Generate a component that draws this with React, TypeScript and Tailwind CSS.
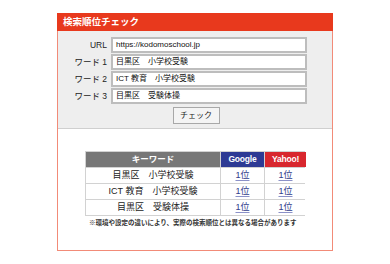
import React from 'react';

const fields = [
  { label: 'URL', value: 'https://kodomoschool.jp' },
  { label: 'ワード 1', value: '目黒区　小学校受験' },
  { label: 'ワード 2', value: 'ICT 教育　小学校受験' },
  { label: 'ワード 3', value: '目黒区　受験体操' },
];

const results = ['目黒区　小学校受験', 'ICT 教育　小学校受験', '目黒区　受験体操'];

const App: React.FC = () => {
  return (
    <div
      className="w-[390px] h-[264px] bg-white pt-[13px] pl-[57px]"
      style={{ fontFamily: '"Liberation Sans", "Noto Sans CJK JP", sans-serif' }}
    >
      <div className="w-[276px] h-[238px] flex flex-col">
        {/* Header */}
        <div className="h-[18px] bg-[#e8391d] flex items-center pl-[6px]">
          <span className="text-[9.5px] font-bold text-white leading-none">検索順位チェック</span>
        </div>

        <div className="flex-1 flex flex-col border-x-[1.5px] border-b-[1.5px] border-[#f28b78]">
          {/* Form */}
          <div className="bg-[#eeeeee] border-b border-[#cfcfcf] pt-[6px] pb-[4px] flex flex-col">
            <div className="flex flex-col gap-[1px]">
              {fields.map((f) => (
                <div key={f.label} className="flex items-center h-[16px]">
                  <div className="w-[49px] text-right text-[8.5px] text-[#222] leading-none">{f.label}</div>
                  <div className="ml-[4px] w-[196px] h-[16px] bg-white border-2 border-[#bdbdbd] flex items-center pl-[3px]">
                    <span className="text-[8px] text-[#111] leading-none whitespace-nowrap">{f.value}</span>
                  </div>
                </div>
              ))}
            </div>
            <div className="flex justify-center mt-[3px] pl-[2px]">
              <div className="w-[47px] h-[17px] bg-[#f4f4f4] border border-[#a8a8a8] flex items-center justify-center">
                <span className="text-[8px] text-[#222] leading-none">チェック</span>
              </div>
            </div>
          </div>

          {/* Result table */}
          <div className="pt-[22px] pl-[27px]">
            <div className="w-[220px] border border-[#d2d2d2] bg-[#d2d2d2] grid grid-cols-[134px_43px_41px] gap-[1px]">
              <div className="h-[15px] bg-[#777777] flex items-center justify-center">
                <span className="text-[8.5px] font-bold text-white leading-none">キーワード</span>
              </div>
              <div className="h-[15px] bg-[#2d3a94] flex items-center justify-center">
                <span className="text-[8.5px] font-bold text-white leading-none tracking-[-0.2px]">Google</span>
              </div>
              <div className="h-[15px] bg-[#d8272e] flex items-center justify-center">
                <span className="text-[8.5px] font-bold text-white leading-none tracking-[-0.2px]">Yahoo!</span>
              </div>
              {results.map((r) => (
                <React.Fragment key={r}>
                  <div className="h-[15px] bg-white flex items-center justify-center">
                    <span className="text-[9px] text-[#222] leading-none whitespace-nowrap">{r}</span>
                  </div>
                  <div className="h-[15px] bg-white flex items-center justify-center">
                    <span className="text-[9px] text-[#2f3d8c] leading-none underline decoration-[#8b91c8] underline-offset-2">1位</span>
                  </div>
                  <div className="h-[15px] bg-white flex items-center justify-center">
                    <span className="text-[9px] text-[#2f3d8c] leading-none underline decoration-[#8b91c8] underline-offset-2">1位</span>
                  </div>
                </React.Fragment>
              ))}
            </div>
            <div className="mt-[4px] pl-[4px] text-[6.5px] font-bold text-[#333] leading-none whitespace-nowrap">
              ※環境や設定の違いにより、実際の検索順位とは異なる場合があります
            </div>
          </div>
        </div>
      </div>
    </div>
  );
};

export default App;
